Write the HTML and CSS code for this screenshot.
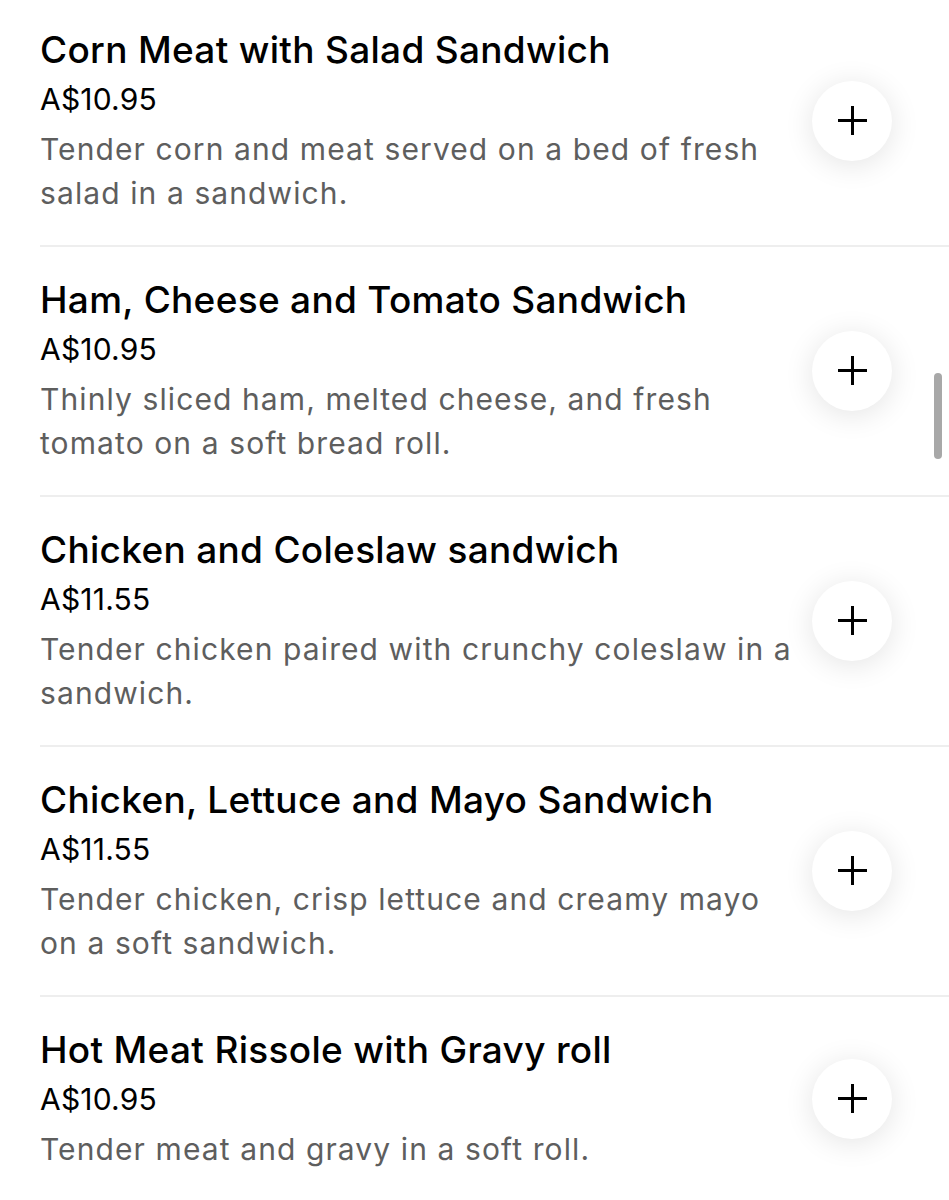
FILE: index.html
```html
<!DOCTYPE html>
<html>
<head>
<meta charset="utf-8">
<title>Sandwiches</title>
<link rel="stylesheet" href="styles.css">
</head>
<body>
<ul class="menu-list">
    <li class="menu-item">
        <div class="item-text">
            <h3 class="item-name">Corn Meat with Salad Sandwich</h3>
            <p class="item-price">A$10.95</p>
            <p class="item-desc">Tender corn and meat served on a bed of fresh salad in a sandwich.</p>
        </div>
        <button class="add-btn"><span class="plus"></span></button>
    </li>
    <li class="menu-item">
        <div class="item-text">
            <h3 class="item-name">Ham, Cheese and Tomato Sandwich</h3>
            <p class="item-price">A$10.95</p>
            <p class="item-desc">Thinly sliced ham, melted cheese, and fresh tomato on a soft bread roll.</p>
        </div>
        <button class="add-btn"><span class="plus"></span></button>
    </li>
    <li class="menu-item">
        <div class="item-text">
            <h3 class="item-name">Chicken and Coleslaw sandwich</h3>
            <p class="item-price">A$11.55</p>
            <p class="item-desc">Tender chicken paired with crunchy coleslaw in a sandwich.</p>
        </div>
        <button class="add-btn"><span class="plus"></span></button>
    </li>
    <li class="menu-item">
        <div class="item-text">
            <h3 class="item-name">Chicken, Lettuce and Mayo Sandwich</h3>
            <p class="item-price">A$11.55</p>
            <p class="item-desc">Tender chicken, crisp lettuce and creamy mayo on a soft sandwich.</p>
        </div>
        <button class="add-btn"><span class="plus"></span></button>
    </li>
    <li class="menu-item">
        <div class="item-text">
            <h3 class="item-name">Hot Meat Rissole with Gravy roll</h3>
            <p class="item-price">A$10.95</p>
            <p class="item-desc">Tender meat and gravy in a soft roll.</p>
        </div>
        <button class="add-btn"><span class="plus"></span></button>
    </li>
</ul>
<div class="scroll-thumb"></div>
</body>
</html>
```

FILE: styles.css
```css
html, body{
    margin:0;
    padding:0;
    background:#fff;
    height:1200px;
    overflow:hidden;
}
body{
    font-family:"Inter", "Noto Sans", sans-serif;
    color:#000;
}
.menu-list{
    list-style:none;
    margin:0;
    padding:0 0 0 40px;
}
.menu-item{
    display:flex;
    align-items:center;
    padding:29px 0 30px 0;
    border-bottom:2px solid #eeeeee;
}
.menu-item:first-child{
    padding-top:26px;
}
.item-text{
    width:758px;
}
.item-name{
    margin:0;
    font-size:37px;
    line-height:48px;
    font-weight:500;
    letter-spacing:0.3px;
}
.item-price{
    margin:1px 0 0 0;
    font-size:30px;
    line-height:48px;
    font-weight:400;
    letter-spacing:0.2px;
}
.item-desc{
    margin:4px 0 0 0;
    font-size:30px;
    line-height:44px;
    color:#5e5e5e;
    letter-spacing:1.1px;
}
.add-btn{
    width:80px;
    height:80px;
    margin-left:14px;
    border:0;
    border-radius:50%;
    background:#fff;
    box-shadow:0 4px 30px rgba(0,0,0,0.11);
    display:flex;
    align-items:center;
    justify-content:center;
    padding:0;
}
.plus{
    position:relative;
    width:29px;
    height:29px;
}
.plus:before, .plus:after{
    content:"";
    position:absolute;
    background:#000;
}
.plus:before{
    left:0; top:13px;
    width:29px; height:3px;
}
.plus:after{
    left:13px; top:0;
    width:3px; height:29px;
}
.scroll-thumb{
    position:fixed;
    left:934px;
    top:373px;
    width:8px;
    height:86px;
    border-radius:4px;
    background:#a8a8a8;
}
```
